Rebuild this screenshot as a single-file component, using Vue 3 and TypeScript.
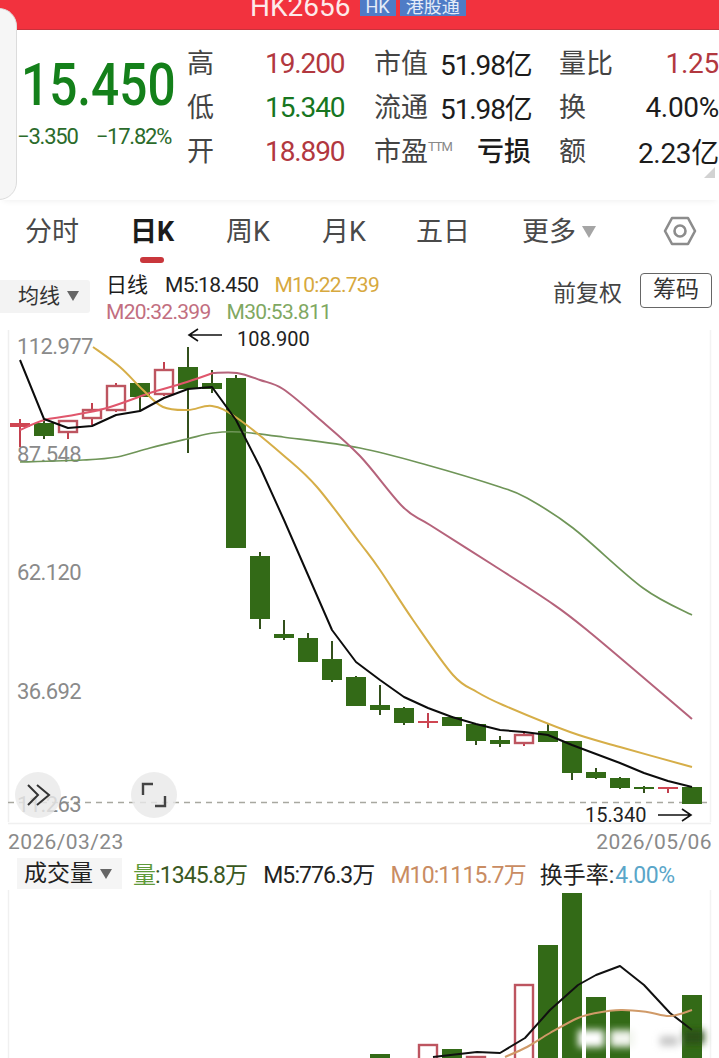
<script setup lang="ts">
type Kind = 'g' | 'h' | 'r'
// [wick high, body top, body bottom, wick low, kind]
const raw: [number, number, number, number, Kind][] = [
  [419, 423, 427, 447, 'r'], [419, 423, 436, 439, 'g'], [420, 421, 432, 439, 'h'], [403, 410, 418, 425, 'h'],
  [383, 386, 410, 412, 'h'], [383, 383, 397, 411, 'g'], [362, 370, 394, 396, 'h'], [347, 367, 389, 453, 'g'],
  [370, 383, 389, 393, 'g'], [375, 378, 548, 548, 'g'], [552, 556, 619, 629, 'g'], [620, 634, 638, 640, 'g'],
  [633, 638, 662, 662, 'g'], [641, 659, 680, 682, 'g'], [676, 677, 706, 706, 'g'], [685, 705, 710, 715, 'g'],
  [707, 708, 723, 725, 'g'], [713, 721, 723, 728, 'r'], [716, 717, 726, 726, 'g'], [724, 724, 741, 745, 'g'],
  [736, 740, 744, 747, 'g'], [731, 735, 743, 746, 'h'], [724, 731, 742, 742, 'g'], [741, 741, 773, 780, 'g'],
  [768, 772, 778, 779, 'g'], [777, 778, 788, 789, 'g'], [786, 787, 789, 793, 'g'], [787, 787, 789, 793, 'r'],
  [787, 787, 804, 804, 'g']
]
const candles = raw.map((c, i) => ({ x: 20 + i * 24, hi: c[0], top: c[1], bot: c[2], lo: c[3], kind: c[4] }))

// Catmull-Rom through the sampled points, for the moving-average curves
function smooth(points: string): string {
  const p = points.split(' ').map((s) => s.split(',').map(Number))
  let d = `M${p[0][0]} ${p[0][1]}`
  for (let i = 0; i < p.length - 1; i++) {
    const a = p[Math.max(i - 1, 0)]
    const b = p[i]
    const c = p[i + 1]
    const e = p[Math.min(i + 2, p.length - 1)]
    const c1x = b[0] + (c[0] - a[0]) / 6
    const c1y = b[1] + (c[1] - a[1]) / 6
    const c2x = c[0] - (e[0] - b[0]) / 6
    const c2y = c[1] - (e[1] - b[1]) / 6
    d += `C${c1x.toFixed(1)} ${c1y.toFixed(1)} ${c2x.toFixed(1)} ${c2y.toFixed(1)} ${c[0]} ${c[1]}`
  }
  return d
}

const m5 = '20,360 44,419 68,428 92,426 116,415 140,411 164,398 188,389 212,387 236,420 260,467 284,520 308,575 332,630 356,662 380,680 404,697 428,708 452,717 476,724 500,730 524,732 548,735 572,745 596,754 620,763 644,773 668,781 692,787'
const m10 = smooth('93,347 120,367 143,390 163,407 188,410 212,406 237,418 283,455 317,487 360,543 380,570 413,620 453,675 477,692 503,705 570,732 620,747 692,767')
const m20a = smooth('20,430 44,420 68,416 107,408 153,392 187,382 213,373')
const m20b = smooth('213,373 237,373 260,380 283,389 317,417 360,456 403,507 430,525 493,565 547,600 587,630 692,719')
const m30 = smooth('20,462 83,460 117,457 150,448 187,439 213,433 240,432 283,437 360,448 427,465 500,487 527,498 573,528 643,588 692,615')

const axis = [
  { y: 354, t: '112.977' }, { y: 462, t: '87.548' }, { y: 580, t: '62.120' },
  { y: 699, t: '36.692' }, { y: 812, t: '11.263' }
]
const bars: { x: number; top: number; hollow?: boolean }[] = [
  { x: 380, top: 1054 }, { x: 428, top: 1045, hollow: true }, { x: 452, top: 1049 }, { x: 476, top: 1057, hollow: true },
  { x: 524, top: 985, hollow: true }, { x: 548, top: 945 }, { x: 572, top: 893 }, { x: 596, top: 997 },
  { x: 620, top: 1011 }, { x: 692, top: 995 }
]
const volM5 = '433,1057 477,1052 500,1053 525,1038 550,1010 578,985 596,975 620,966 644,985 670,1013 692,1030'
const volM10 = smooth('505,1057 527,1047 550,1033 578,1018 596,1013 621,1010 647,1012 670,1016 692,1010')

const tabs = ['分时', '日K', '周K', '月K', '五日']
</script>

<template>
  <div class="page">
    <div class="side-tab"></div>

    <header class="topbar">
      <span class="code">HK2656</span>
      <span class="tag tag-hk">HK</span>
      <span class="tag tag-cn">港股通</span>
    </header>

    <section class="quote">
      <div class="price-box">
        <div class="price">15.450</div>
        <div class="change"><span>−3.350</span><span>−17.82%</span></div>
      </div>
      <div class="stats">
        <span class="lb">高</span><span class="val rd">19.200</span>
        <span class="lb">市值</span><span class="val bk">51.98亿</span>
        <span class="lb">量比</span><span class="val rd end">1.25</span>

        <span class="lb">低</span><span class="val gr">15.340</span>
        <span class="lb">流通</span><span class="val bk">51.98亿</span>
        <span class="lb">换</span><span class="val bk end">4.00%</span>

        <span class="lb">开</span><span class="val rd">18.890</span>
        <span class="lb">市盈<sup class="ttm">TTM</sup></span><span class="val bk loss">亏损</span>
        <span class="lb">额</span><span class="val bk end">2.23亿</span>
      </div>
      <i class="corner"></i>
    </section>

    <nav class="tabs">
      <span v-for="(t, i) in tabs" :key="t" class="tab" :class="{ active: i === 1 }">{{ t }}</span>
      <span class="tab more">更多<i class="tri tri-more"></i></span>
      <svg class="hex" width="34" height="30" viewBox="0 0 34 30">
        <path d="M9 2H25L32 15L25 28H9L2 15Z" fill="none" stroke="#8c8c8c" stroke-width="2.6" stroke-linejoin="round" />
        <circle cx="17" cy="15" r="5.5" fill="none" stroke="#8c8c8c" stroke-width="2.6" />
      </svg>
    </nav>

    <section class="legend">
      <div class="ma-btn">均线<i class="tri tri-dark"></i></div>
      <div class="ma-values">
        <div class="ma-line">
          <span class="day">日线</span><span class="bk2">M5:18.450</span><span class="yl">M10:22.739</span>
        </div>
        <div class="ma-line">
          <span class="pk">M20:32.399</span><span class="lg">M30:53.811</span>
        </div>
      </div>
      <span class="adj">前复权</span>
      <span class="chips">筹码</span>
    </section>

    <svg class="chart" width="719" height="500" viewBox="0 325 719 500">
      <line x1="8.5" y1="330" x2="8.5" y2="822" stroke="#efefef" stroke-width="1.5" />
      <line x1="710.5" y1="330" x2="710.5" y2="822" stroke="#f3f3f3" stroke-width="1.5" />
      <line x1="8" y1="823.5" x2="711" y2="823.5" stroke="#f0f0f0" stroke-width="1.5" />
      <line x1="8" y1="802.5" x2="710" y2="802.5" stroke="#a8a8a0" stroke-width="1.5" stroke-dasharray="6 5" />

      <text v-for="a in axis" :key="a.t" class="axis" x="17" :y="a.y">{{ a.t }}</text>

      <g v-for="c in candles" :key="c.x">
        <line :x1="c.x" :y1="c.hi" :x2="c.x" :y2="c.lo" :stroke="c.kind === 'g' ? '#33501c' : '#c2404e'" stroke-width="2" />
        <rect v-if="c.kind === 'h'" :x="c.x - 9" :y="c.top" width="18" :height="c.bot - c.top" fill="#fff" stroke="#bd5560" stroke-width="2.4" />
        <rect v-else :x="c.x - 10" :y="c.top" width="20" :height="c.bot - c.top" :fill="c.kind === 'g' ? '#336a17' : '#cf4652'" />
      </g>

      <path :d="m30" class="ln thin" stroke="#6f9558" />
      <path :d="m20a" class="ln" stroke="#e0566c" />
      <path :d="m20b" class="ln" stroke="#b5637b" />
      <path :d="m10" class="ln" stroke="#d6ae48" />
      <polyline :points="m5" class="ln" stroke="#0c0c0c" stroke-width="2.2" />

      <path d="M222 335H189M198 329L189 335L198 341" fill="none" stroke="#111" stroke-width="1.6" />
      <text class="mark" x="237" y="346">108.900</text>
      <text class="mark" x="585" y="822">15.340</text>
      <path d="M658 815H691M682 809L691 815L682 821" fill="none" stroke="#111" stroke-width="1.6" />

      <circle cx="38" cy="795" r="23" fill="#e9e9e9" fill-opacity="0.82" />
      <circle cx="154" cy="795" r="23" fill="#e9e9e9" fill-opacity="0.82" />
      <path d="M28 785L38 795L28 805M37 785L49 795L37 805" fill="none" stroke="#333" stroke-width="2" />
      <path d="M143 795V784H153M155 806H165V796" fill="none" stroke="#444" stroke-width="2.4" />
    </svg>

    <div class="dates"><span>2026/03/23</span><span>2026/05/06</span></div>

    <section class="vol-legend">
      <div class="vol-btn">成交量<i class="tri tri-dark"></i></div>
      <span class="v-main"><b>量</b>:1345.8万</span>
      <span class="bk2">M5:776.3万</span>
      <span class="or">M10:1115.7万</span>
      <span class="bk2 rate">换手率:<em>4.00%</em></span>
    </section>

    <svg class="vol" width="719" height="168" viewBox="0 890 719 168">
      <defs>
        <filter id="soft" x="-20%" y="-40%" width="140%" height="180%"><feGaussianBlur stdDeviation="3.5" /></filter>
      </defs>
      <line x1="8.5" y1="890" x2="8.5" y2="1058" stroke="#f0f0f0" stroke-width="1.5" />
      <line x1="710.5" y1="890" x2="710.5" y2="1058" stroke="#f3f3f3" stroke-width="1.5" />
      <g v-for="b in bars" :key="b.x">
        <rect v-if="b.hollow" :x="b.x - 9" :y="b.top" width="18" :height="1062 - b.top" fill="#fff" stroke="#bd5560" stroke-width="2.4" />
        <rect v-else :x="b.x - 10" :y="b.top" width="20" :height="1058 - b.top" fill="#336a17" />
      </g>
      <polyline :points="volM5" class="ln" stroke="#111" />
      <path :d="volM10" class="ln" stroke="#d09a68" stroke-width="2.2" />
      <g filter="url(#soft)">
        <rect x="578" y="1030" width="26" height="17" fill="#fff" />
        <rect x="610" y="1030" width="24" height="17" fill="#f2f5ee" />
        <rect x="660" y="1036" width="18" height="10" fill="#c8c8c8" />
        <rect x="684" y="1030" width="20" height="14" fill="#2b4f18" />
      </g>
    </svg>
  </div>
</template>

<style scoped>
.page {
  position: relative;
  width: 719px;
  height: 1058px;
  overflow: hidden;
  background: #fff;
  color: #1c1c1c;
  font-family: Roboto, "Noto Sans CJK SC", sans-serif;
}
.side-tab {
  position: absolute;
  left: -20px;
  top: 8px;
  width: 35px;
  height: 190px;
  background: #f6f6f6;
  border: 1px solid #dcdcdc;
  border-radius: 18px;
  z-index: 2;
}
.topbar {
  height: 30px;
  box-sizing: border-box;
  background: #f2323e;
  border-bottom: 1px solid #c8323c;
  display: flex;
  align-items: flex-end;
  padding: 0 0 13px 250px;
  color: #fdeaea;
  overflow: hidden;
}
.code {
  font-size: 28px;
  line-height: 28px;
  margin-right: 9px;
  margin-bottom: -5px;
}
.tag {
  height: 22px;
  padding: 0 6px;
  background: #4f7cc6;
  font-size: 18px;
  line-height: 26px;
  color: #e4ecf8;
  white-space: nowrap;
}
.tag-hk { margin-right: 4px; }
.tag-cn { padding: 0 6px 0 6px; }
.quote {
  position: relative;
  height: 170px;
  display: flex;
  box-shadow: 0 4px 6px -3px #f0f0f0;
}
.price-box {
  width: 187px;
  padding-left: 17px;
  box-sizing: border-box;
}
.price {
  margin-top: 25px;
  width: 170px;
  padding-left: 4px;
  font-size: 59px;
  line-height: 60px;
  font-weight: 500;
  color: #14801a;
  transform: scaleX(0.84);
  transform-origin: 4px 50%;
  white-space: nowrap;
}
.change {
  margin-top: 9px;
  display: flex;
  gap: 18px;
  font-size: 22px;
  line-height: 26px;
  letter-spacing: -1.2px;
  color: #2b6b2b;
  white-space: nowrap;
}
.stats {
  flex: 1;
  margin-top: 9px;
  display: grid;
  grid-template-columns: 78px 109px 66px 119px 60px 100px;
  grid-auto-rows: 44px;
  align-items: center;
  white-space: nowrap;
}
.lb {
  font-size: 27px;
  color: #444;
}
.ttm {
  font-size: 13px;
  color: #888;
  vertical-align: 10px;
  line-height: 0;
  letter-spacing: -1px;
}
.val {
  font-size: 28px;
  letter-spacing: -1.1px;
  padding-top: 4px;
}
.rd { color: #b2383f; }
.gr { color: #17761f; }
.bk { color: #1c1c1c; }
.end { text-align: right; letter-spacing: -0.3px; }
.loss {
  font-size: 27px;
  font-weight: 500;
  letter-spacing: 0;
  padding-left: 37px;
  padding-top: 0;
}
.corner {
  position: absolute;
  right: 4px;
  top: 137px;
  width: 0;
  height: 0;
  border-left: 11px solid transparent;
  border-bottom: 11px solid #d2d2d2;
}
.tabs {
  height: 65px;
  display: flex;
  align-items: flex-start;
  padding-top: 15px;
  box-sizing: border-box;
  position: relative;
}
.tab {
  position: absolute;
  top: 15px;
  font-size: 27px;
  line-height: 34px;
  color: #4a4a4a;
}
.tab:nth-child(1) { left: 25px; }
.tab:nth-child(2) { left: 130px; }
.tab:nth-child(3) { left: 226px; }
.tab:nth-child(4) { left: 322px; }
.tab:nth-child(5) { left: 416px; }
.tab.more { left: 522px; }
.tab.active {
  font-weight: 700;
  color: #1c1c1c;
}
.tab.active::after {
  content: "";
  position: absolute;
  left: 10px;
  top: 42px;
  width: 24px;
  height: 6px;
  border-radius: 3px;
  background: #c9373c;
}
.tri {
  display: inline-block;
  width: 0;
  height: 0;
  border-left: 6px solid transparent;
  border-right: 6px solid transparent;
  border-top: 10px solid #666;
}
.tri-more {
  margin-left: 6px;
  vertical-align: 3px;
  border-left-width: 7px;
  border-right-width: 7px;
  border-top: 12px solid #a5a5a5;
}
.tri-dark { margin-left: 7px; vertical-align: 2px; }
.hex {
  position: absolute;
  left: 663px;
  top: 16px;
}
.legend {
  height: 60px;
  display: flex;
  align-items: flex-start;
  position: relative;
}
.ma-btn {
  margin-top: 15px;
  width: 90px;
  height: 33px;
  box-sizing: border-box;
  padding-left: 18px;
  background: #f3f3f3;
  border-radius: 0 3px 3px 0;
  font-size: 21px;
  line-height: 33px;
  white-space: nowrap;
  color: #333;
}
.ma-values {
  margin-left: 16px;
  margin-top: 7px;
  width: 447px;
  font-size: 21px;
  line-height: 27px;
  letter-spacing: -0.7px;
}
.ma-line { display: flex; gap: 16px; white-space: nowrap; }
.ma-line:first-child { gap: 17px; }
.ma-line:first-child .yl { margin-left: -1px; }
.day { letter-spacing: 0; margin-right: 0; }
.bk2 { color: #222; }
.yl { color: #d7a93e; }
.pk { color: #c26e80; }
.lg { color: #7fa862; }
.adj {
  margin-top: 14px;
  font-size: 23px;
  line-height: 30px;
  color: #444;
  width: 87px;
  white-space: nowrap;
}
.chips {
  margin-top: 8px;
  width: 72px;
  height: 35px;
  box-sizing: border-box;
  border: 1px solid #666;
  border-radius: 4px;
  font-size: 23px;
  line-height: 31px;
  text-align: center;
  color: #333;
}
.chart, .vol { display: block; }
.ln { fill: none; stroke-width: 2; stroke-linejoin: round; }
.thin { stroke-width: 1.7; }
.axis {
  font-size: 22px;
  letter-spacing: -0.6px;
  fill: #8a8a8a;
}
.mark {
  font-size: 20px;
  fill: #222;
}
.dates {
  height: 31px;
  display: flex;
  justify-content: space-between;
  padding: 4px 7px 0 8px;
  box-sizing: border-box;
  font-size: 21px;
  letter-spacing: 0.4px;
  line-height: 26px;
  color: #8a8a8a;
}
.vol-legend {
  height: 34px;
  display: flex;
  align-items: center;
  font-size: 23px;
  letter-spacing: -0.9px;
  white-space: nowrap;
  position: relative;
}
.vol-btn {
  margin-left: 17px;
  width: 105px;
  height: 31px;
  box-sizing: border-box;
  padding-left: 7px;
  background: #f5f5f5;
  line-height: 31px;
  letter-spacing: 0;
  color: #222;
  margin-right: 11px;
}
.v-main { color: #3a5822; margin-right: 16px; }
.v-main b { font-weight: 400; color: #5f9a3a; }
.or { color: #c98c62; margin: 0 14px 0 16px; }
.rate { letter-spacing: 0; }
em { font-style: normal; color: #5aa6c9; letter-spacing: -0.5px; margin-left: 1px; }
</style>
